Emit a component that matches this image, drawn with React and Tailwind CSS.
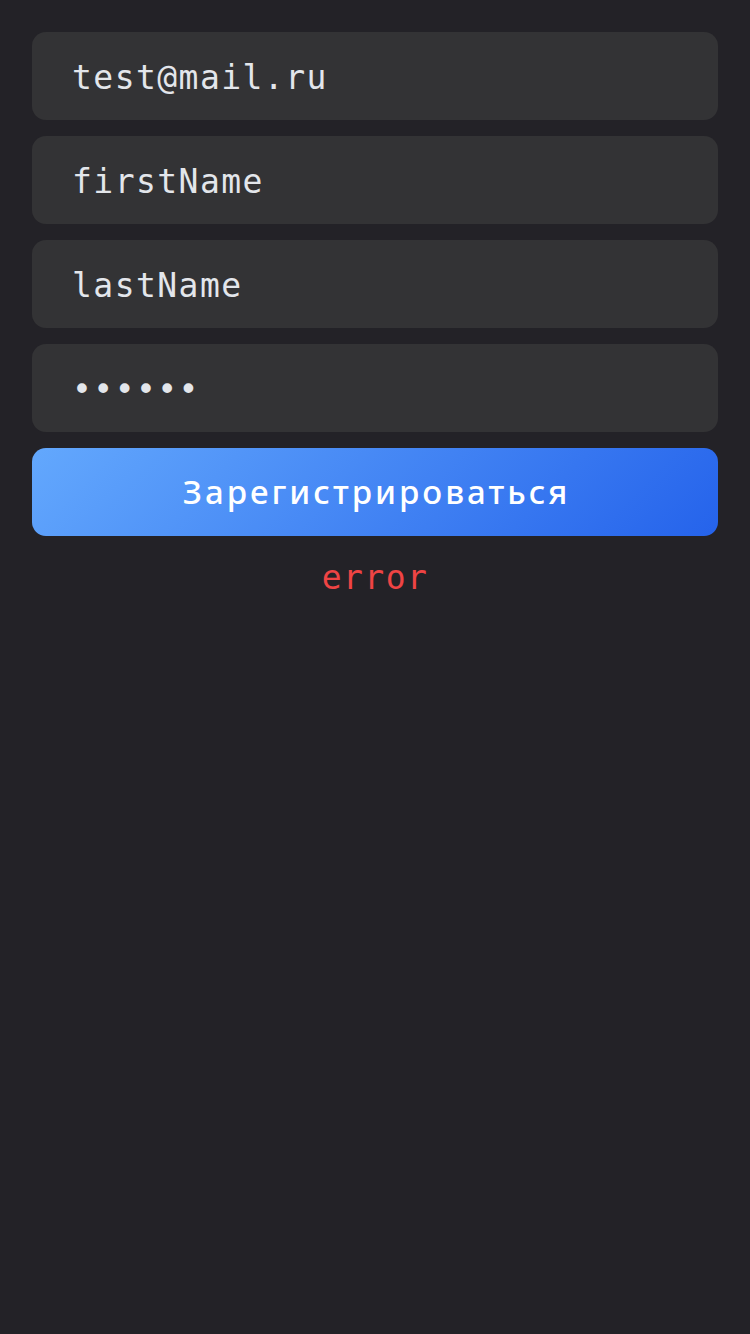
const mono = "font-['DejaVu_Sans_Mono','Liberation_Mono',monospace] text-[33px] tracking-[1.45px]"

function Field({ value, type = 'text' }) {
  return (
    <input
      readOnly
      type={type}
      value={value}
      className={`h-[88px] w-full rounded-[14px] bg-[#333335] pt-[3px] pl-[40px] pr-[40px] text-[#e3e6eb] outline-none ${mono}`}
    />
  )
}

export default function App() {
  return (
    <main className="min-h-[1334px] bg-[#232227] px-8 pt-8">
      <form className="flex flex-col gap-4">
        <Field value="test@mail.ru" />
        <Field value="firstName" />
        <Field value="lastName" />
        <Field value="123456" type="password" />
        <button
          type="button"
          className="h-[88px] w-full rounded-[14px] bg-[linear-gradient(135deg,#63a8fd,#2563eb)] pl-[3px] font-['Noto_Sans',sans-serif] text-[33px] font-medium tracking-[3px] text-white"
        >
          Зарегистрироваться
        </button>
      </form>
      <p className={`mt-[22px] text-center leading-[40px] text-[#ef4444] ${mono}`}>error</p>
    </main>
  )
}
